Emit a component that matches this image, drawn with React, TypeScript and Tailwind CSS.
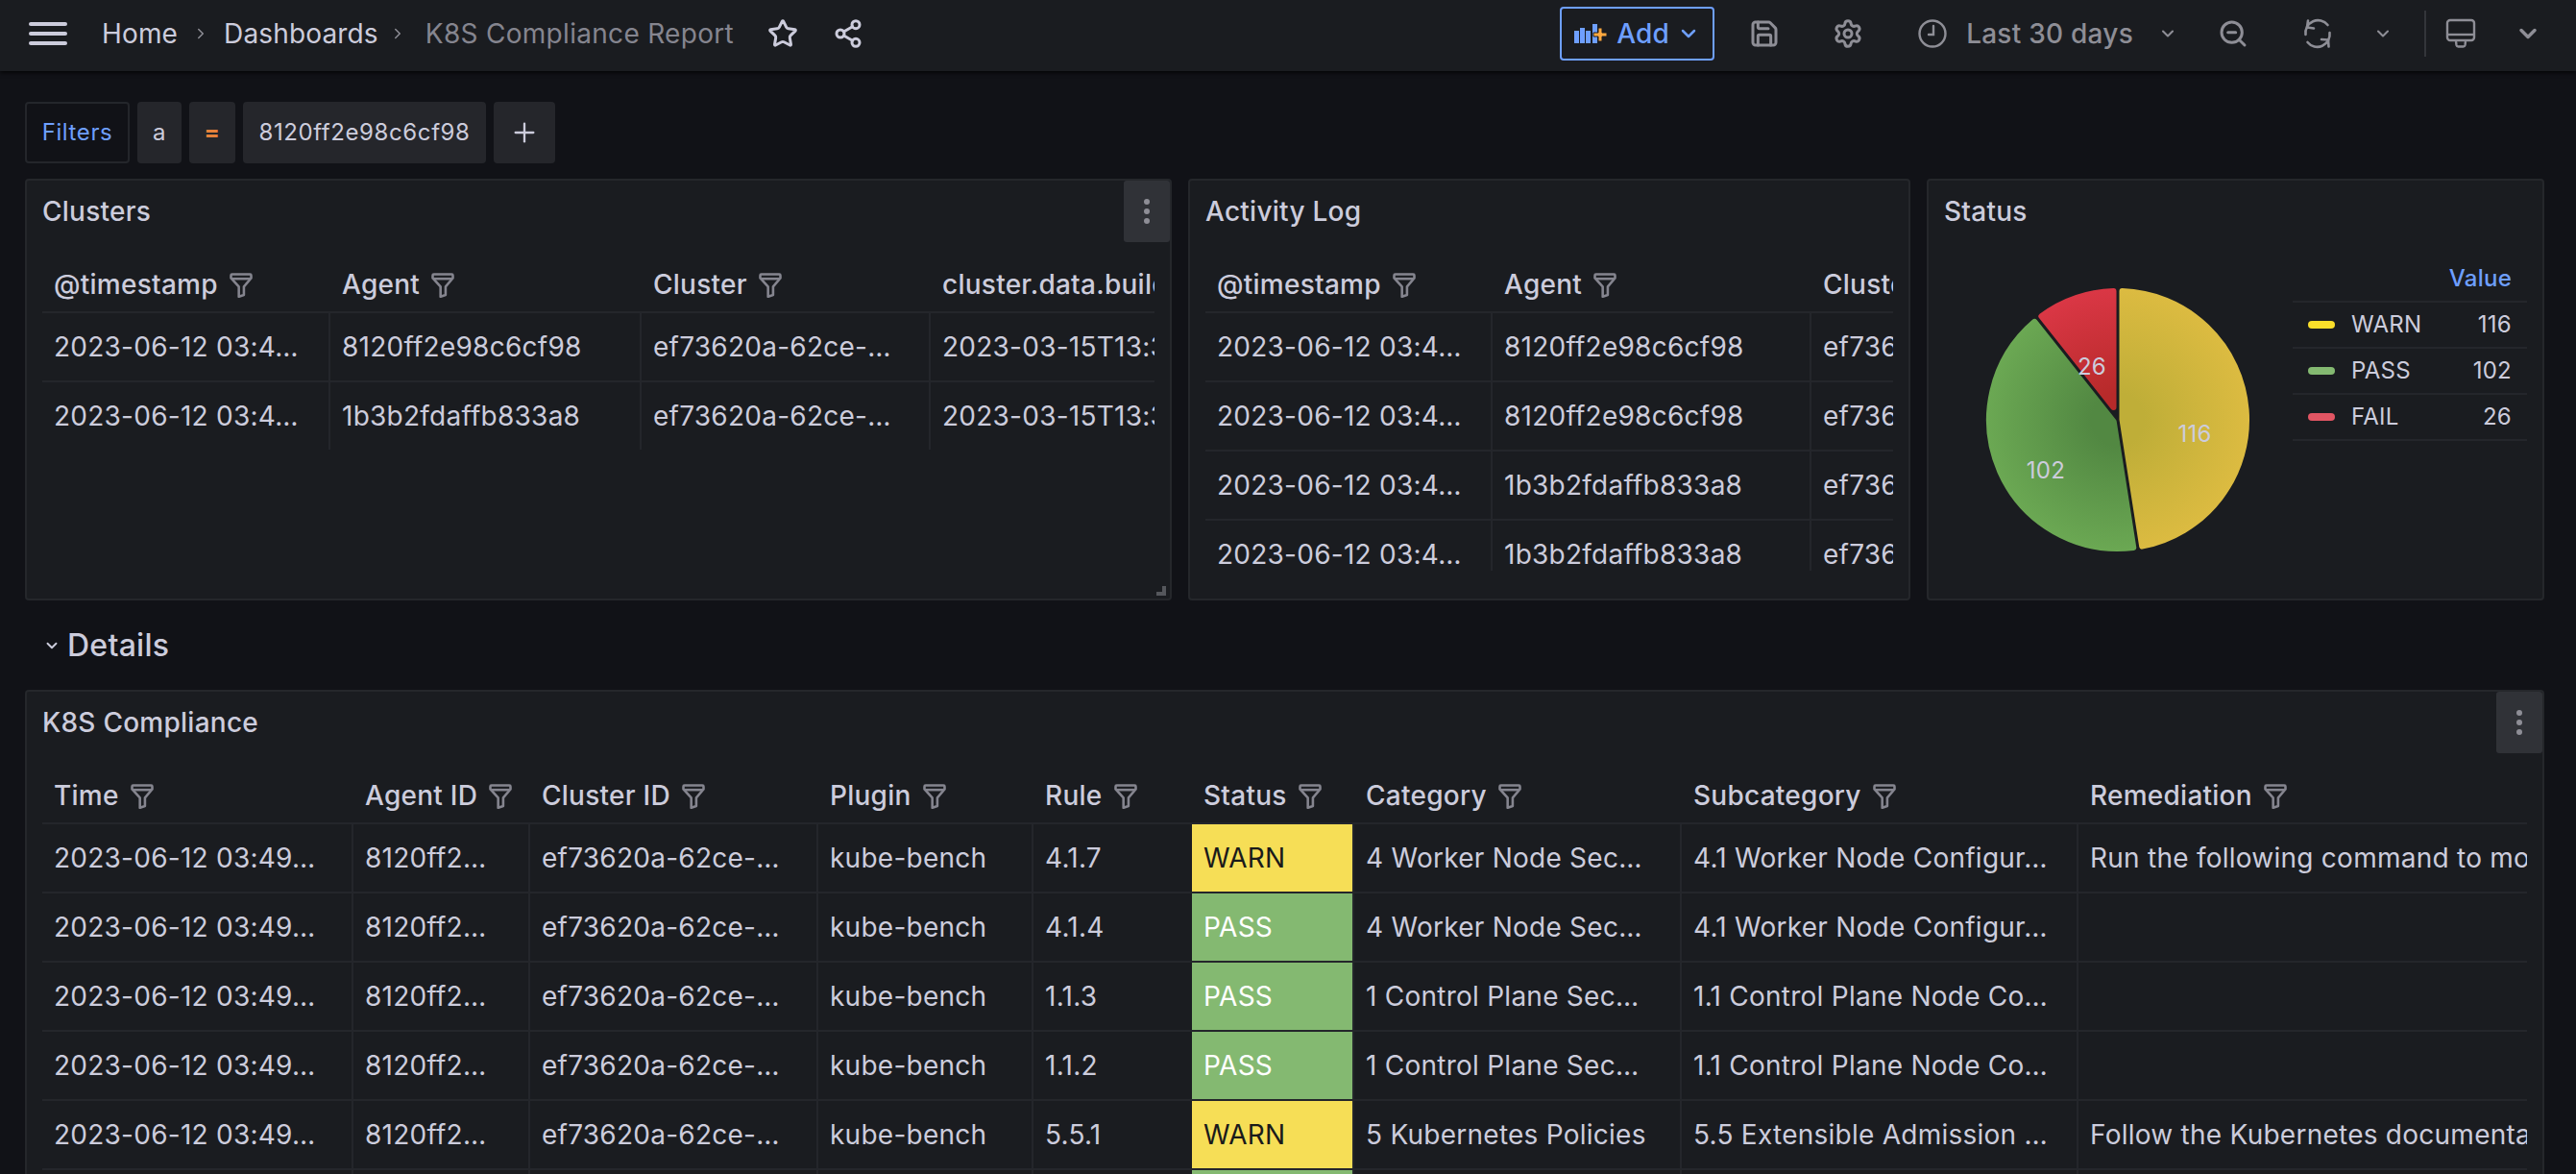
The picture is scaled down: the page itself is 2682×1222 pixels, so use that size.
import { ChevronDown, ChevronRight, Plus, Save, Settings, Share2, Star, ZoomOut } from "lucide-react";

type Cell = string | { status: "WARN" | "PASS" };

interface TableProps {
  widths: number[];
  headers: string[];
  rows: Cell[][];
  height?: string;
}

function FilterIcon() {
  return (
    <svg width="28" height="28" viewBox="0 0 24 24" fill="none" className="ml-[10px] shrink-0 text-[#85858f]">
      <path
        d="M4 3h16a1 1 0 0 1 1 1v2.4L14.500 14v7.500L10 23V14L3 6.400V4a1 1 0 0 1 1-1z"
        stroke="currentColor"
        strokeWidth="2.200"
        strokeLinejoin="round"
      />
      <path d="M3.500 7h17" stroke="currentColor" strokeWidth="2.200" />
    </svg>
  );
}

function Table({ widths, headers, rows, height }: TableProps) {
  return (
    <div className={`overflow-hidden ${height ?? ""}`}>
      <div className="flex h-[74px] w-max border-b-2 border-[#24262b] pt-4">
        {headers.map((h, i) => (
          <div
            key={h}
            className={`flex items-center overflow-hidden whitespace-nowrap pr-1 text-[28px] font-medium ${
              i === 0 || h === "Status" ? "pl-3" : "pl-[14px]"
            }`}
            style={{ width: widths[i] }}
          >
            {h}
            <FilterIcon />
          </div>
        ))}
      </div>
      {rows.map((row, r) => (
        <div key={r} className={`flex w-max ${r === rows.length - 1 ? "h-[70px]" : "h-[72px] border-b-2 border-[#24262b]"}`}>
          {row.map((cell, i) => {
            const first = i === 0;
            if (typeof cell !== "string") {
              return (
                <div
                  key={i}
                  className={`flex items-center pl-3 text-[28px] ${
                    cell.status === "WARN" ? "bg-[#f6de56] text-[#1a1a1a]" : "bg-[#84b971] text-white"
                  }`}
                  style={{ width: widths[i] }}
                >
                  {r === 5 ? "" : cell.status}
                </div>
              );
            }
            return (
              <div
                key={i}
                className={`flex items-center overflow-hidden whitespace-nowrap text-[28px] ${
                  first ? "pl-3" : "border-l-2 border-[#24262b] pl-3"
                }`}
                style={{ width: widths[i] }}
              >
                {cell}
              </div>
            );
          })}
        </div>
      ))}
    </div>
  );
}

function PanelMenu() {
  return (
    <div className="absolute top-0 right-0 flex h-16 w-12 flex-col items-center justify-center gap-[4px] rounded-[3px] bg-[#303237]">
      <span className="h-[6px] w-[6px] rounded-full bg-[#8e8e96]" />
      <span className="h-[6px] w-[6px] rounded-full bg-[#8e8e96]" />
      <span className="h-[6px] w-[6px] rounded-full bg-[#8e8e96]" />
    </div>
  );
}

function PanelTitle({ children }: { children: string }) {
  return <div className="flex h-16 items-center px-4 text-[28px] font-medium">{children}</div>;
}

// pie wedge, angles in degrees clockwise from 12 o'clock
function wedge(a0: number, a1: number) {
  const cx = 181;
  const cy = 185;
  const R = 134;
  const d = 4.5;
  const half = (a1 - a0) / 2;
  const rad = (a: number) => (a * Math.PI) / 180;
  const pt = (a: number, r: number) => `${cx + r * Math.sin(rad(a))} ${cy - r * Math.cos(rad(a))}`;
  const off = (Math.asin(d / R) * 180) / Math.PI;
  const apex = pt(a0 + half, d / Math.sin(rad(half)));
  return `M${apex}L${pt(a0 + off, R)}A${R} ${R} 0 ${a1 - a0 > 180 ? 1 : 0} 1 ${pt(a1 - off, R)}Z`;
}

function Pie() {
  const slices = [
    { id: "warn", a0: 0, a1: 171.1, from: "#bfae38", to: "#dcbb41" },
    { id: "pass", a0: 171.1, a1: 321.6, from: "#528842", to: "#6ba853" },
    { id: "fail", a0: 321.6, a1: 360, from: "#b72a2a", to: "#da3745" },
  ];
  return (
    <svg width="363" height="371" viewBox="0 0 363 371" className="shrink-0">
      <defs>
        {slices.map((s) => (
          <radialGradient key={s.id} id={s.id} gradientUnits="userSpaceOnUse" cx="181" cy="185" r="137">
            <stop offset="0.2" stopColor={s.from} />
            <stop offset="1" stopColor={s.to} />
          </radialGradient>
        ))}
      </defs>
      {slices.map((s) => (
        <path
          key={s.id}
          d={wedge(s.a0, s.a1)}
          fill={`url(#${s.id})`}
          stroke={`url(#${s.id})`}
          strokeWidth="6"
          strokeLinejoin="round"
        />
      ))}
      <g fill="#ccccdc" fontSize="24" textAnchor="middle">
        <text x="261" y="208">116</text>
        <text x="106" y="246">102</text>
        <text x="154" y="138">26</text>
      </g>
    </svg>
  );
}

function LegendRow({ color, label, value }: { color: string; label: string; value: number }) {
  return (
    <div className="flex h-[48px] items-center border-b-2 border-[#24262b] pr-4 pl-4 text-[24px]">
      <span className={`h-2 w-7 rounded-full ${color}`} />
      <span className="ml-[17px]">{label}</span>
      <span className="ml-auto">{value}</span>
    </div>
  );
}

function TopBar() {
  const icon = "shrink-0 text-[#8e8e96]";
  return (
    <div className="relative z-10 flex h-[74px] shrink-0 items-center justify-between bg-[#1a1c20] pr-[36px] pb-1 pl-[30px] shadow-[0_2px_4px_rgba(0,0,0,0.7)]">
      <div className="flex items-center text-[28px] tracking-[0.15px]">
        <div className="flex w-10 flex-col gap-[6px]">
          <span className="h-1 rounded-full bg-[#ccccdc]" />
          <span className="h-1 rounded-full bg-[#ccccdc]" />
          <span className="h-1 rounded-full bg-[#ccccdc]" />
        </div>
        <span className="ml-[36px]">Home</span>
        <ChevronRight size={18} className="ml-[15px] text-[#8e8e96]" />
        <span className="ml-[15px]">Dashboards</span>
        <ChevronRight size={18} className="ml-[11px] text-[#8e8e96]" />
        <span className="ml-[20px] tracking-[0.3px] text-[#85858f]">K8S Compliance Report</span>
        <Star size={32} strokeWidth={2.25} className="ml-[35px] text-[#ccccdc]" />
        <Share2 size={32} strokeWidth={2.25} className="ml-[36px] text-[#ccccdc]" />
      </div>
      <div className="flex items-center">
        <div className="flex h-[56px] w-[161px] items-center rounded-[4px] border-2 border-[#6e9fff] pl-[13px] text-[28px] font-medium text-[#6e9fff]">
          <svg width="36" height="24" viewBox="0 0 36 24" className="shrink-0">
            <rect x="0" y="9" width="5" height="13" fill="#6e9fff" />
            <rect x="6" y="6" width="5" height="16" fill="#6e9fff" />
            <rect x="12" y="9" width="5" height="13" fill="#6e9fff" />
            <rect x="19" y="2" width="5" height="20" fill="#6e9fff" />
            <path d="M25 6h4v5h5v4h-5v5h-4v-5h-5v-4h5z" fill="#ffa83f" stroke="#1a1c20" strokeWidth="1" />
          </svg>
          <span className="ml-[8px]">Add</span>
          <ChevronDown size={24} strokeWidth={2.5} className="ml-[8px]" />
        </div>
        <Save size={32} strokeWidth={2.25} className={`ml-[36px] ${icon}`} />
        <Settings size={32} strokeWidth={2.25} className={`ml-[55px] ${icon}`} />
        <svg width="32" height="32" viewBox="0 0 32 32" fill="none" className={`ml-[56px] ${icon}`}>
          <circle cx="16" cy="16" r="13.500" stroke="currentColor" strokeWidth="2.400" />
          <path d="M17 8v9h-5" stroke="currentColor" strokeWidth="2.400" strokeLinecap="round" />
        </svg>
        <span className="ml-[19px] text-[28px] font-medium text-[#8e8e96]">Last 30 days</span>
        <ChevronDown size={20} strokeWidth={2.5} className={`ml-[26px] ${icon}`} />
        <ZoomOut size={32} strokeWidth={2.25} className={`ml-[42px] ${icon}`} />
        <svg width="32" height="32" viewBox="0 0 32 32" fill="none" className={`ml-[56px] ${icon}`}>
          <path d="M3.500 17a13 13 0 0 1 23-10" stroke="currentColor" strokeWidth="2.600" strokeLinecap="round" />
          <path d="M28.500 15a13 13 0 0 1-23 10" stroke="currentColor" strokeWidth="2.600" strokeLinecap="round" />
          <path d="M5 2.500 4 9.500l7 1" stroke="currentColor" strokeWidth="2.600" strokeLinecap="round" strokeLinejoin="round" transform="translate(1 0)" />
          <path d="M20 22l7 .5.500 7" stroke="currentColor" strokeWidth="2.600" strokeLinecap="round" strokeLinejoin="round" />
        </svg>
        <ChevronDown size={20} strokeWidth={2.5} className={`ml-[42px] ${icon}`} />
        <div className="ml-[33px] h-12 w-[2px] bg-[#33353a]" />
        <svg width="32" height="32" viewBox="0 0 32 32" fill="none" className={`ml-[20px] ${icon}`}>
          <rect x="2" y="2" width="28" height="21" rx="3" stroke="currentColor" strokeWidth="2.400" />
          <path d="M2 17h28" stroke="currentColor" strokeWidth="2.400" />
          <path d="M11 24l.5 4a2 2 0 0 0 2 1.500h5a2 2 0 0 0 2-1.500l.5-4" stroke="currentColor" strokeWidth="2.400" />
        </svg>
        <ChevronDown size={28} strokeWidth={3} className={`ml-[40px] ${icon}`} />
      </div>
    </div>
  );
}

const ts = "2023-06-12 03:4…";
const uid = "ef73620a-62ce-…";
const build = "2023-03-15T13:31:58Z";

const clusterRows: Cell[][] = [
  [ts, "8120ff2e98c6cf98", uid, build],
  [ts, "1b3b2fdaffb833a8", uid, build],
];

const activityRows: Cell[][] = [
  [ts, "8120ff2e98c6cf98", uid],
  [ts, "8120ff2e98c6cf98", uid],
  [ts, "1b3b2fdaffb833a8", uid],
  [ts, "1b3b2fdaffb833a8", uid],
];

const k8sTime = "2023-06-12 03:49…";
const k8sAgent = "8120ff2…";

function k8sRow(rule: string, status: "WARN" | "PASS", category: string, sub: string, fix: string): Cell[] {
  return [k8sTime, k8sAgent, uid, "kube-bench", rule, { status }, category, sub, fix];
}

const k8sRows: Cell[][] = [
  k8sRow("4.1.7", "WARN", "4 Worker Node Sec…", "4.1 Worker Node Configur…", "Run the following command to modify"),
  k8sRow("4.1.4", "PASS", "4 Worker Node Sec…", "4.1 Worker Node Configur…", ""),
  k8sRow("1.1.3", "PASS", "1 Control Plane Sec…", "1.1 Control Plane Node Co…", ""),
  k8sRow("1.1.2", "PASS", "1 Control Plane Sec…", "1.1 Control Plane Node Co…", ""),
  k8sRow("5.5.1", "WARN", "5 Kubernetes Policies", "5.5 Extensible Admission …", "Follow the Kubernetes documentation"),
  ["", "", "", "", "", { status: "PASS" }, "", "", ""],
];

export default function App() {
  return (
    <div className="flex h-[1222px] w-full flex-col overflow-hidden bg-[#111217] font-[family-name:Inter,sans-serif] tracking-[0.25px] text-[#ccccdc]">
      <TopBar />

      <div className="mt-8 flex h-16 shrink-0 gap-2 pl-[26px] text-[24px] tracking-[0.6px]">
        <div className="flex w-[109px] items-center justify-center rounded-[4px] border-2 border-[#24262b] text-[#6e9fff]">Filters</div>
        <div className="flex w-[46px] items-center justify-center rounded-[4px] bg-[#25262b]">a</div>
        <div className="flex w-[48px] items-center justify-center rounded-[4px] bg-[#25262b] font-bold text-[#e5813a]">=</div>
        <div className="flex w-[253px] items-center justify-center rounded-[4px] bg-[#25262b]">8120ff2e98c6cf98</div>
        <div className="flex w-16 items-center justify-center rounded-[4px] bg-[#25262b]">
          <Plus size={32} strokeWidth={1.75} />
        </div>
      </div>

      <div className="mt-4 flex h-[439px] shrink-0 gap-[17px] pl-[26px]">
        <div className="relative w-[1194px] rounded-[4px] border-2 border-[#25272b] bg-[#1a1c20]">
          <PanelTitle>Clusters</PanelTitle>
          <div className="px-4">
            <Table
              widths={[298, 324, 301, 400]}
              headers={["@timestamp", "Agent", "Cluster", "cluster.data.build"]}
              rows={clusterRows}
            />
          </div>
          <PanelMenu />
          <div className="absolute right-[4px] bottom-[3px] h-[10px] w-[10px] border-r-4 border-b-4 border-[#55575c]" />
        </div>

        <div className="w-[752px] rounded-[4px] border-2 border-[#25272b] bg-[#1a1c20]">
          <PanelTitle>Activity Log</PanelTitle>
          <div className="px-4">
            <Table
              widths={[297, 332, 300]}
              headers={["@timestamp", "Agent", "Cluster"]}
              rows={activityRows}
              height="h-[342px]"
            />
          </div>
        </div>

        <div className="w-[643px] rounded-[4px] border-2 border-[#25272b] bg-[#1a1c20]">
          <PanelTitle>Status</PanelTitle>
          <div className="flex pl-4">
            <Pie />
            <div className="mt-[15px] w-[244px]">
              <div className="flex h-[48px] items-center justify-end border-b-2 border-[#24262b] pr-4 text-[24px] font-medium text-[#6e9fff]">
                Value
              </div>
              <LegendRow color="bg-[#fade2a]" label="WARN" value={116} />
              <LegendRow color="bg-[#84b971]" label="PASS" value={102} />
              <LegendRow color="bg-[#e25563]" label="FAIL" value={26} />
            </div>
          </div>
        </div>
      </div>

      <div className="flex h-[93px] shrink-0 items-center pl-[45px] text-[32px] font-medium">
        <ChevronDown size={18} strokeWidth={2.5} className="text-[#ccccdc]" />
        <span className="ml-[7px]">Details</span>
      </div>

      <div className="relative ml-[26px] min-h-0 w-[2623px] grow overflow-hidden rounded-t-[4px] border-x-2 border-t-2 border-[#25272b] bg-[#1a1c20]">
        <PanelTitle>K8S Compliance</PanelTitle>
        <div className="px-4">
          <Table
            widths={[322, 184, 300, 224, 167, 167, 341, 413, 469]}
            headers={["Time", "Agent ID", "Cluster ID", "Plugin", "Rule", "Status", "Category", "Subcategory", "Remediation"]}
            rows={k8sRows}
          />
        </div>
        <PanelMenu />
      </div>
    </div>
  );
}
